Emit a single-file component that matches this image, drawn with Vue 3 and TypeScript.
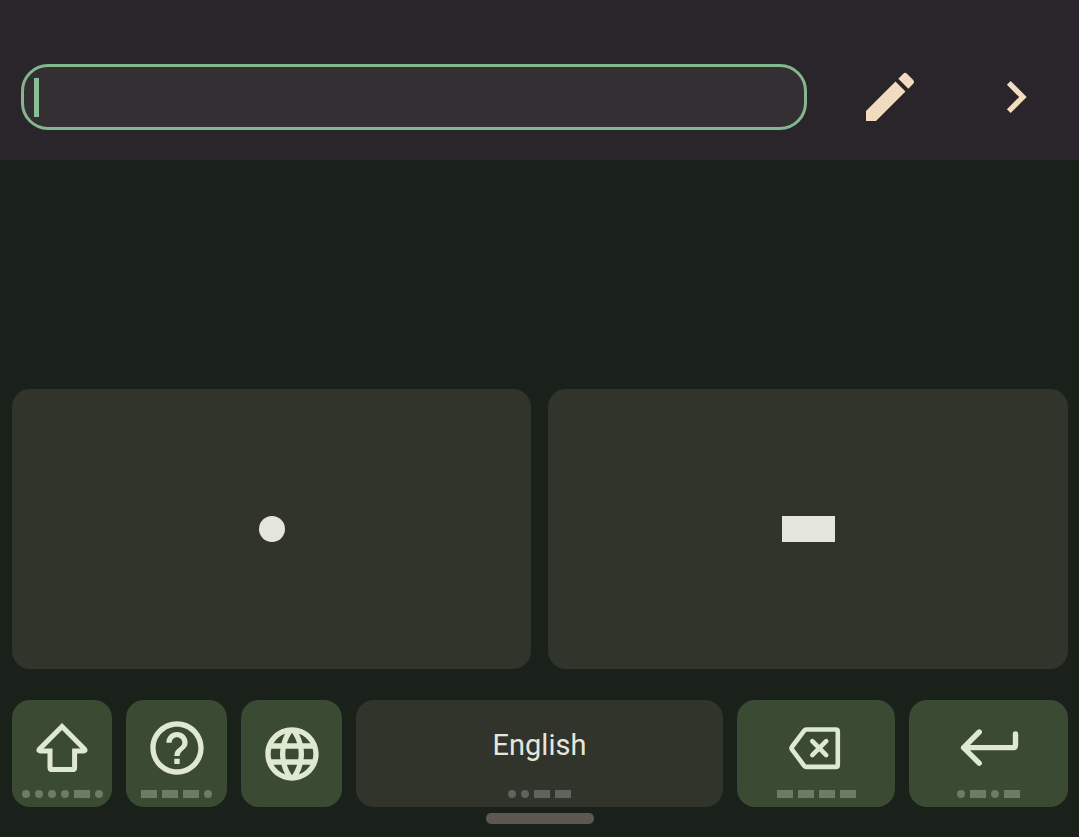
<script setup lang="ts">
import { ref } from 'vue'

interface ActionKey {
  id: string
  label: string
  code: string
  tone: 'accent' | 'plain'
}

const text = ref('')

const keys: ActionKey[] = [
  { id: 'shift', label: 'Shift', code: '....-.', tone: 'accent' },
  { id: 'help', label: 'Help', code: '---.', tone: 'accent' },
  { id: 'globe', label: 'Change language', code: '', tone: 'accent' },
  { id: 'space', label: 'English', code: '..--', tone: 'plain' },
  { id: 'backspace', label: 'Backspace', code: '----', tone: 'accent' },
  { id: 'enter', label: 'Enter', code: '.-.-', tone: 'accent' },
]
</script>

<template>
  <div class="screen">
    <header class="bar">
      <label class="field">
        <span class="caret" aria-hidden="true"></span>
        <input v-model="text" class="input" type="text" aria-label="Text" />
      </label>
      <button class="tool" type="button" aria-label="Edit">
        <svg class="icon" viewBox="0 0 24 24" fill="currentColor">
          <path d="M3 17.25V21h3.75L17.81 9.94l-3.75-3.75L3 17.25zM20.71 7.04a1 1 0 0 0 0-1.41l-2.34-2.34a1 1 0 0 0-1.41 0l-1.83 1.83 3.75 3.75 1.83-1.83z" />
        </svg>
      </button>
      <button class="tool" type="button" aria-label="Next">
        <svg class="icon" viewBox="0 0 24 24" fill="currentColor">
          <path d="M10 6 8.59 7.41 13.17 12l-4.58 4.59L10 18l6-6z" />
        </svg>
      </button>
    </header>

    <main class="keyboard">
      <div class="signals">
        <button class="signal" type="button" aria-label="Dot"><span class="big-dot"></span></button>
        <button class="signal" type="button" aria-label="Dash"><span class="big-dash"></span></button>
      </div>

      <div class="actions">
        <button
          v-for="key in keys"
          :key="key.id"
          type="button"
          :class="['key', key.tone]"
          :aria-label="key.label"
        >
          <span :class="['face', { coded: key.code && key.tone === 'accent' }]">
            <svg v-if="key.id === 'shift'" class="icon" viewBox="0 0 64 64" fill="none" stroke="currentColor" stroke-width="5">
              <path d="M32 10.6 54.6 33.2Q55.8 34.8 53.8 34.9H44.6V51.4Q44.6 53.6 42.4 53.6H22.2Q20 53.6 20 51.4V34.9H10.2Q8.2 34.8 9.4 33.2Z" />
            </svg>
            <svg v-else-if="key.id === 'help'" class="icon" viewBox="0 0 24 24" fill="currentColor">
              <path d="M11 18h2v-2h-2v2zm1-16C6.48 2 2 6.48 2 12s4.48 10 10 10 10-4.48 10-10S17.52 2 12 2zm0 18c-4.41 0-8-3.59-8-8s3.59-8 8-8 8 3.59 8 8-3.59 8-8 8zm0-14c-2.21 0-4 1.79-4 4h2c0-1.1.9-2 2-2s2 .9 2 2c0 2-3 1.75-3 5h2c0-2.25 3-2.5 3-5 0-2.21-1.79-4-4-4z" />
            </svg>
            <svg v-else-if="key.id === 'globe'" class="icon" viewBox="0 0 24 24" fill="currentColor">
              <path d="M11.99 2C6.47 2 2 6.48 2 12s4.47 10 9.99 10C17.52 22 22 17.52 22 12S17.52 2 11.99 2zm6.93 6h-2.95c-.32-1.25-.78-2.45-1.38-3.56 1.84.63 3.37 1.91 4.33 3.56zM12 4.04c.83 1.2 1.48 2.53 1.91 3.96h-3.82c.43-1.43 1.08-2.76 1.91-3.96zM4.26 14C4.1 13.36 4 12.69 4 12s.1-1.36.26-2h3.38c-.08.66-.14 1.32-.14 2 0 .68.06 1.34.14 2H4.26zm.82 2h2.95c.32 1.25.78 2.45 1.38 3.56-1.84-.63-3.37-1.9-4.33-3.56zm2.95-8H5.08c.96-1.66 2.49-2.93 4.33-3.56C8.81 5.55 8.35 6.75 8.03 8zM12 19.96c-.83-1.2-1.48-2.53-1.91-3.96h3.82c-.43 1.43-1.08 2.76-1.91 3.96zM14.34 14H9.66c-.09-.66-.16-1.32-.16-2 0-.68.07-1.35.16-2h4.68c.09.65.16 1.32.16 2 0 .68-.07 1.34-.16 2zm.25 5.56c.6-1.11 1.06-2.31 1.38-3.56h2.95c-.96 1.65-2.49 2.93-4.33 3.56zM16.36 14c.08-.66.14-1.32.14-2 0-.68-.06-1.34-.14-2h3.38c.16.64.26 1.31.26 2s-.1 1.36-.26 2h-3.38z" />
            </svg>
            <svg v-else-if="key.id === 'backspace'" class="icon" viewBox="0 0 64 64" fill="none" stroke="currentColor" stroke-width="4.6" stroke-linecap="round" stroke-linejoin="round">
              <path d="M22.4 13.5H51.8Q53.8 13.5 53.8 15.5V48.9Q53.8 50.9 51.8 50.9H22.4Q21 50.9 20.2 49.8L7.9 33.4Q7.1 32.2 7.9 31L20.2 14.6Q21 13.5 22.4 13.5Z" />
              <path d="M28.3 25.2 42.2 39.1M42.2 25.2 28.3 39.1" />
            </svg>
            <svg v-else-if="key.id === 'enter'" class="icon" viewBox="0 0 64 64" fill="none" stroke="currentColor" stroke-width="5.4" stroke-linecap="round" stroke-linejoin="round">
              <path d="M22.2 16 6.6 31.6 22.2 47.2M6.6 31.6H56Q58.5 31.6 58.5 29.1V18" />
            </svg>
            <span v-else class="name">{{ key.label }}</span>
          </span>
          <span v-if="key.code" class="code" aria-hidden="true">
            <i v-for="(mark, n) in key.code.split('')" :key="n" :class="mark === '.' ? 'dot' : 'dash'"></i>
          </span>
        </button>
      </div>

      <div class="handle"></div>
    </main>
  </div>
</template>

<style>
body {
  margin: 0;
  background: #1a201a;
}
</style>

<style scoped>
.screen {
  box-sizing: border-box;
  min-height: 100vh;
  display: flex;
  flex-direction: column;
  background: #1a201a;
  font-family: Roboto, "Liberation Sans", sans-serif;
}

button {
  border: 0;
  margin: 0;
  padding: 0;
  font: inherit;
  cursor: pointer;
}

.bar {
  display: flex;
  align-items: center;
  padding: 64px 0 30px 21px;
  background: #29252a;
}

.field {
  box-sizing: border-box;
  flex: 1;
  min-width: 0;
  height: 66px;
  margin-right: 20px;
  padding: 0 10px;
  display: flex;
  align-items: center;
  border: 3px solid #84b78e;
  border-radius: 27px;
  background: #332f32;
}

.caret {
  width: 5px;
  height: 39px;
  background: #8abf94;
}

.input {
  flex: 1;
  min-width: 0;
  height: 40px;
  padding: 0;
  border: 0;
  outline: 0;
  background: transparent;
  color: #e3e5dc;
  font: inherit;
  font-size: 29px;
}

.tool {
  width: 126px;
  height: 66px;
  display: flex;
  align-items: center;
  justify-content: center;
  background: transparent;
  color: #f2dcbf;
}

.icon {
  display: block;
  width: 64px;
  height: 64px;
}

.keyboard {
  flex: 1;
  display: flex;
  flex-direction: column;
  justify-content: flex-end;
  padding: 24px 11px 13px 12px;
}

.signals {
  display: grid;
  grid-template-columns: 519fr 520fr;
  gap: 17px;
  margin-bottom: 31px;
}

.signal {
  height: 280px;
  display: flex;
  align-items: center;
  justify-content: center;
  border-radius: 18px;
  background: #31342b;
}

.big-dot {
  width: 26px;
  height: 26px;
  border-radius: 50%;
  background: #e4e6de;
}

.big-dash {
  width: 53px;
  height: 26px;
  background: #e4e6de;
}

.actions {
  display: grid;
  grid-template-columns: 100fr 101fr 101fr 367fr 158fr 159fr;
  gap: 14px;
}

.key {
  min-width: 0;
  height: 107px;
  display: flex;
  flex-direction: column;
  align-items: center;
  border-radius: 18px;
}

.accent {
  background: #3b4a32;
  color: #dfe8d0;
}

.plain {
  background: #31342b;
  color: #e4e6de;
}

.face {
  flex: 1;
  display: flex;
  align-items: center;
  justify-content: center;
}

.coded {
  padding-top: 5px;
}

.name {
  font-size: 29px;
  line-height: 36px;
}

.code {
  display: flex;
  gap: 5px;
  padding-bottom: 9px;
  color: #6e7c63;
}

.plain .code {
  color: #5e645c;
}

.dot,
.dash {
  width: 8px;
  height: 8px;
  background: currentColor;
}

.dot {
  border-radius: 50%;
}

.dash {
  width: 16px;
}

.handle {
  align-self: center;
  width: 108px;
  height: 11px;
  margin-top: 6px;
  border-radius: 5px;
  background: #5c5850;
}
</style>
